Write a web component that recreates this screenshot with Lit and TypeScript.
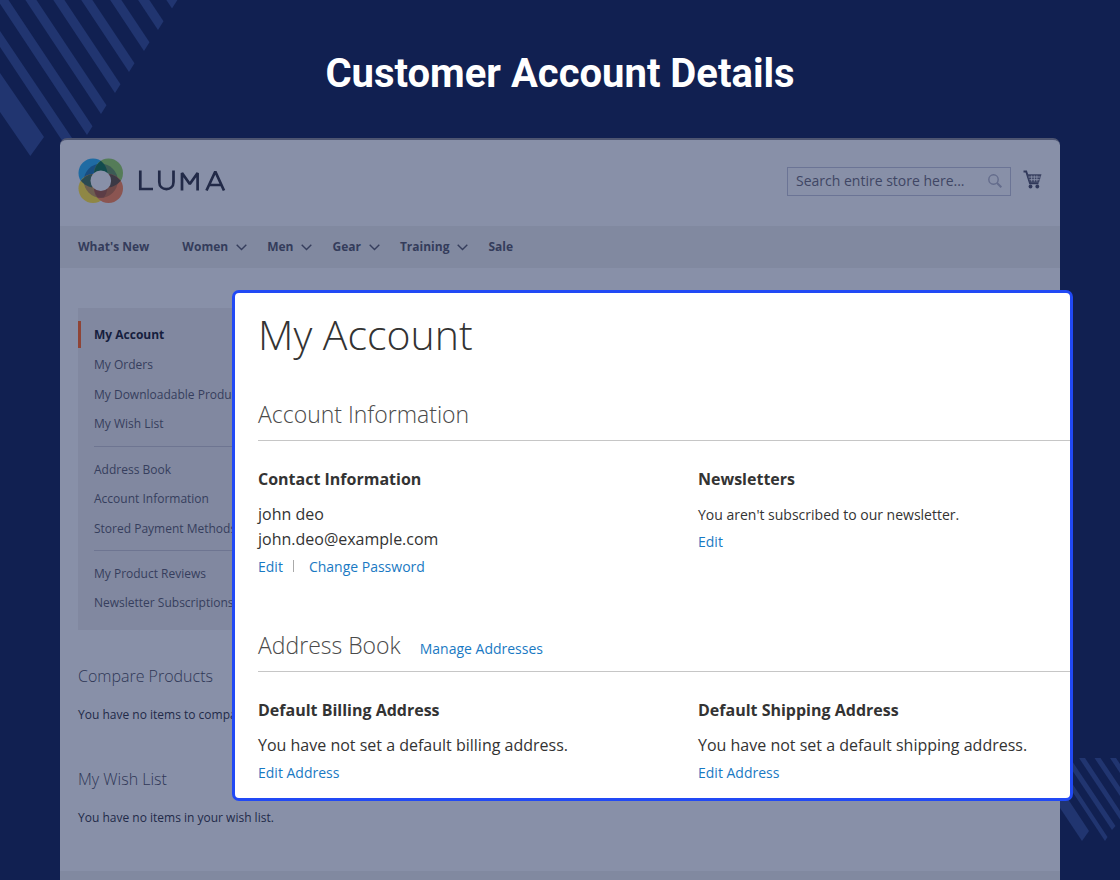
import { LitElement, html, css, svg } from "lit";
import { customElement } from "lit/decorators.js";

const NAV = [
  { label: "What's New", menu: false },
  { label: "Women", menu: true },
  { label: "Men", menu: true },
  { label: "Gear", menu: true },
  { label: "Training", menu: true },
  { label: "Sale", menu: false },
];

const SIDE = [
  ["My Account", "My Orders", "My Downloadable Products", "My Wish List"],
  ["Address Book", "Account Information", "Stored Payment Methods"],
  ["My Product Reviews", "Newsletter Subscriptions"],
];

@customElement("store-header")
class StoreHeader extends LitElement {
  static styles = css`
    :host { display: block; }
    .top { display: flex; align-items: center; justify-content: space-between; box-sizing: border-box; height: 86px; padding: 0 18px 4px; }
    .logo { display: flex; align-items: center; color: #222a48; }
    .logo svg { display: block; }
    .tools { display: flex; align-items: center; gap: 12px; }
    .search { display: flex; align-items: center; box-sizing: border-box; width: 224px; height: 29px; border: 1px solid #6b7495; padding: 0 8px; }
    .search input { flex: 1; min-width: 0; border: 0; padding: 0; background: none; outline: 0; font: 14px/20px "Open Sans", sans-serif; color: #3a4260; }
    .search input::placeholder { color: #3f4664; opacity: 1; }
    button { display: block; border: 0; padding: 0; background: none; }
    button svg { display: block; }
    .cart { padding-bottom: 4px; }
    nav { display: flex; align-items: center; height: 42px; padding: 0 18px; background: #8189a0; }
    nav a { display: flex; align-items: center; font: 700 12px/20px "Open Sans", sans-serif; color: #343c5b; text-decoration: none; margin-right: 20px; }
    nav a.plain { margin-right: 33px; }
    nav svg { margin-left: 8px; }
  `;
  render() {
    return html`
      <div class="top">
        <a class="logo" href="#" aria-label="Luma">
          <svg width="148" height="46" viewBox="0 0 148 46">
            <circle cx="15" cy="15" r="14.5" fill="#1f6ba3" />
            <circle cx="30.5" cy="15" r="14.5" fill="#557c58" />
            <circle cx="15" cy="30.5" r="14.5" fill="#8f8745" />
            <circle cx="30.5" cy="30.5" r="14.5" fill="#8b5551" />
            <clipPath id="ring"><circle cx="22.8" cy="22.8" r="17" /></clipPath>
            <g clip-path="url(#ring)">
              <circle cx="15" cy="15" r="14.5" fill="#194d80" />
              <circle cx="30.5" cy="15" r="14.5" fill="#3c5b55" />
              <circle cx="15" cy="30.5" r="14.5" fill="#6d5f50" />
              <circle cx="30.5" cy="30.5" r="14.5" fill="#6d4848" />
            </g>
            <path d="M22.8 2.8Q28 7 29.5 14.500H16Q17.500 7 22.800 2.800z" fill="#124b4d" />
            <path d="M2.800 22.800Q7 17.500 14 16v13.500Q7 28 2.800 22.800z" fill="#2a4a52" />
            <path d="M42.800 22.800Q38.500 17.500 31.500 16v13.500Q38.500 28 42.800 22.800z" fill="#3b3945" />
            <path d="M22.800 42.800Q28 38.500 29.500 31H16Q17.500 38.500 22.800 42.800z" fill="#5c3d46" clip-path="url(#ring)" />
            <circle cx="22.8" cy="22.8" r="10.3" fill="#8890a8" />
            <g fill="none" stroke="#222a48" stroke-width="2.7">
              <path d="M62.300 12.500v18.500H75" />
              <path d="M81.300 12.500v11.500c0 9.500 14.200 9.500 14.200 0V12.500" />
              <path d="M104 32.500V15l7.800 11 7.800-11v17.500" stroke-linejoin="bevel" />
              <path d="m128.500 32.500 8.800-19L146 32.500M132 27h10.800" stroke-linejoin="bevel" />
            </g>
          </svg>
        </a>
        <div class="tools">
          <div class="search">
            <input type="text" aria-label="Search" placeholder="Search entire store here..." />
            <button aria-label="Search">
              <svg width="14" height="14" viewBox="0 0 14 14" fill="none" stroke="#646c8c" stroke-width="1.4"><circle cx="5.5" cy="5.5" r="4.7" /><path d="m9 9 4.300 4.300" stroke-width="2" /></svg>
            </button>
          </div>
          <button class="cart" aria-label="Cart">
            <svg width="19" height="19" viewBox="0 0 19 19">
              <path d="M.5 1.500h2.700L7 13.200h8.500" fill="none" stroke="#30385a" stroke-width="1.9" />
              <path d="M4 4.200h14.500l-2.500 8.300H6.500z" fill="#3a4262" />
              <path d="M5.500 7H17.500M6.500 9.700h10M8.700 5.500v6M11.300 5.500v6M13.900 5.500v6" stroke="#8890a8" stroke-width=".9" />
              <circle cx="7.500" cy="16.500" r="1.900" fill="#30385a" /><circle cx="14.300" cy="16.500" r="1.900" fill="#30385a" />
            </svg>
          </button>
        </div>
      </div>
      <nav>
        ${NAV.map((n) => html`<a class=${n.menu ? "menu" : "plain"} href="#">${n.label}${n.menu
          ? html`<svg width="11" height="7" viewBox="0 0 11 7" fill="none" stroke="#363e5d" stroke-width="1.400"><path d="m.7.7 4.800 4.800L10.300.7" /></svg>`
          : ""}</a>`)}
      </nav>
    `;
  }
}

@customElement("store-sidebar")
class StoreSidebar extends LitElement {
  static styles = css`
    :host { display: block; width: 225px; font: 12px/20px "Open Sans", sans-serif; color: #222a48; }
    nav { background: #8188a0; padding: 12px 16px 12px 0; }
    ul { list-style: none; margin: 0; padding: 0; }
    ul + ul { border-top: 1px solid #6e7591; margin: 7px 0 0 16px; padding-top: 8px; }
    ul + ul a { padding-left: 0; }
    a { display: block; box-sizing: border-box; height: 30px; padding: 5px 0 5px 16px; color: #363e5d; text-decoration: none; white-space: nowrap; }
    li { height: 29px; }
    li:nth-child(even) { height: 30px; }
    .current { height: 27px; margin-top: 1px; padding: 4px 0 3px 13px; border-left: 3px solid #8f4436; font-weight: 700; color: #161e3e; }
    section { margin-top: 33px; }
    h3 { margin: 0; font: 300 16px/26px "Open Sans", sans-serif; color: #2f3756; }
    p { margin: 16px 0 0; white-space: nowrap; }
    section + section { margin-top: 41px; }
  `;
  render() {
    return html`
      <nav aria-label="Account">
        ${SIDE.map((g) => html`<ul>${g.map((t) => html`<li><a class=${t === "My Account" ? "current" : ""} href="#">${t}</a></li>`)}</ul>`)}
      </nav>
      <section><h3>Compare Products</h3><p>You have no items to compare.</p></section>
      <section><h3>My Wish List</h3><p>You have no items in your wish list.</p></section>
    `;
  }
}

@customElement("account-panel")
class AccountPanel extends LitElement {
  static styles = css`
    :host { display: block; box-sizing: border-box; border: 3px solid #2149f5; border-radius: 7px; background: #fff; padding: 13px 0 12px 23px; font: 16px/25px "Open Sans", sans-serif; color: #333; }
    h1 { margin: 0; font-weight: 300; font-size: 41px; line-height: 56px; }
    .head { display: flex; align-items: baseline; gap: 19px; border-bottom: 1px solid #c6c6c6; padding-bottom: 10px; }
    h2 { margin: 0; font-weight: 300; font-size: 23px; line-height: 32px; color: #4a4a4a; }
    .first { margin-top: 36px; }
    .second { margin-top: 49px; }
    .cols { display: grid; grid-template-columns: 440px 1fr; margin-top: 26px; }
    h3 { margin: 0 0 10px; font-size: 16px; line-height: 25px; font-weight: 700; }
    p { margin: 0; }
    .small { font-size: 14px; }
    a { font-size: 14px; color: #1979c3; text-decoration: none; }
    .links { display: flex; align-items: center; height: 28px; }
    .bar { width: 1px; height: 12px; background: #aaa; margin: 0 15px 0 10px; }
  `;
  render() {
    return html`
      <h1>My Account</h1>
      <div class="head first"><h2>Account Information</h2></div>
      <div class="cols">
        <div>
          <h3>Contact Information</h3>
          <p>john deo<br />john.deo@example.com</p>
          <div class="links"><a href="#">Edit</a><span class="bar"></span><a href="#">Change Password</a></div>
        </div>
        <div>
          <h3>Newsletters</h3>
          <p class="small">You aren't subscribed to our newsletter.</p>
          <div class="links"><a href="#">Edit</a></div>
        </div>
      </div>
      <div class="head second"><h2>Address Book</h2><a href="#">Manage Addresses</a></div>
      <div class="cols">
        <div>
          <h3>Default Billing Address</h3>
          <p>You have not set a default billing address.</p>
          <div class="links"><a href="#">Edit Address</a></div>
        </div>
        <div>
          <h3>Default Shipping Address</h3>
          <p>You have not set a default shipping address.</p>
          <div class="links"><a href="#">Edit Address</a></div>
        </div>
      </div>
    `;
  }
}

const STRIPE_TIPS = [[87, 135], [101, 114], [115, 93], [129, 72], [144, 51], [158, 30], [172, 8.5]];

@customElement("app-root")
class AppRoot extends LitElement {
  static styles = css`
    :host { display: block; position: relative; height: 100vh; overflow: hidden; background: #112051; }
    .stripes { position: absolute; fill: #213570; }
    .tl { top: 0; left: 0; }
    .br { right: 0; bottom: 39px; }
    .title { position: relative; margin: 0; padding: 51px 0 41px; text-align: center; font: 700 40px/46px Roboto, sans-serif; color: #fff; }
    .stage { position: relative; margin: 0 60px; }
    .page { box-sizing: border-box; min-height: calc(100vh - 138px); border-radius: 7px 7px 0 0; border-top: 2px solid #4e5571; background: #8890a8; display: flex; flex-direction: column; }
    .body { flex: 1; padding: 40px 18px 0; }
    .foot { height: 9px; background: #8189a0; }
    account-panel { position: absolute; top: 152px; left: 172px; right: -13px; }
  `;
  render() {
    return html`
      <svg class="stripes tl" width="180" height="160" viewBox="0 0 180 160">
        <path d="M0 73V112L30.300 156 44 137z" />
        <path d="M0 31V47L65 145 72 138z" />
        ${STRIPE_TIPS.map(([x, y]) => svg`<path d=${`M${x} ${y}l5.500-8.700L${x - 84.5} ${y - 144}h-11z`} />`)}
      </svg>
      <svg class="stripes br" width="60" height="83" viewBox="0 0 60 83">
        <path d="M0 50 22 83 29 73 0 29z" />
        <path d="M0 15V7L47.500 79 45 83z" />
        <path d="M4 0h6L55.500 68 52 72z" />
        <path d="M19 0h6L60 53v8.500z" />
        <path d="M34.500 0h6L60 29v9z" />
        <path d="M50 0h6L60 6v9z" />
      </svg>
      <h1 class="title">Customer Account Details</h1>
      <div class="stage">
        <div class="page">
          <store-header></store-header>
          <div class="body"><store-sidebar></store-sidebar></div>
          <div class="foot"></div>
        </div>
        <account-panel></account-panel>
      </div>
    `;
  }
}
